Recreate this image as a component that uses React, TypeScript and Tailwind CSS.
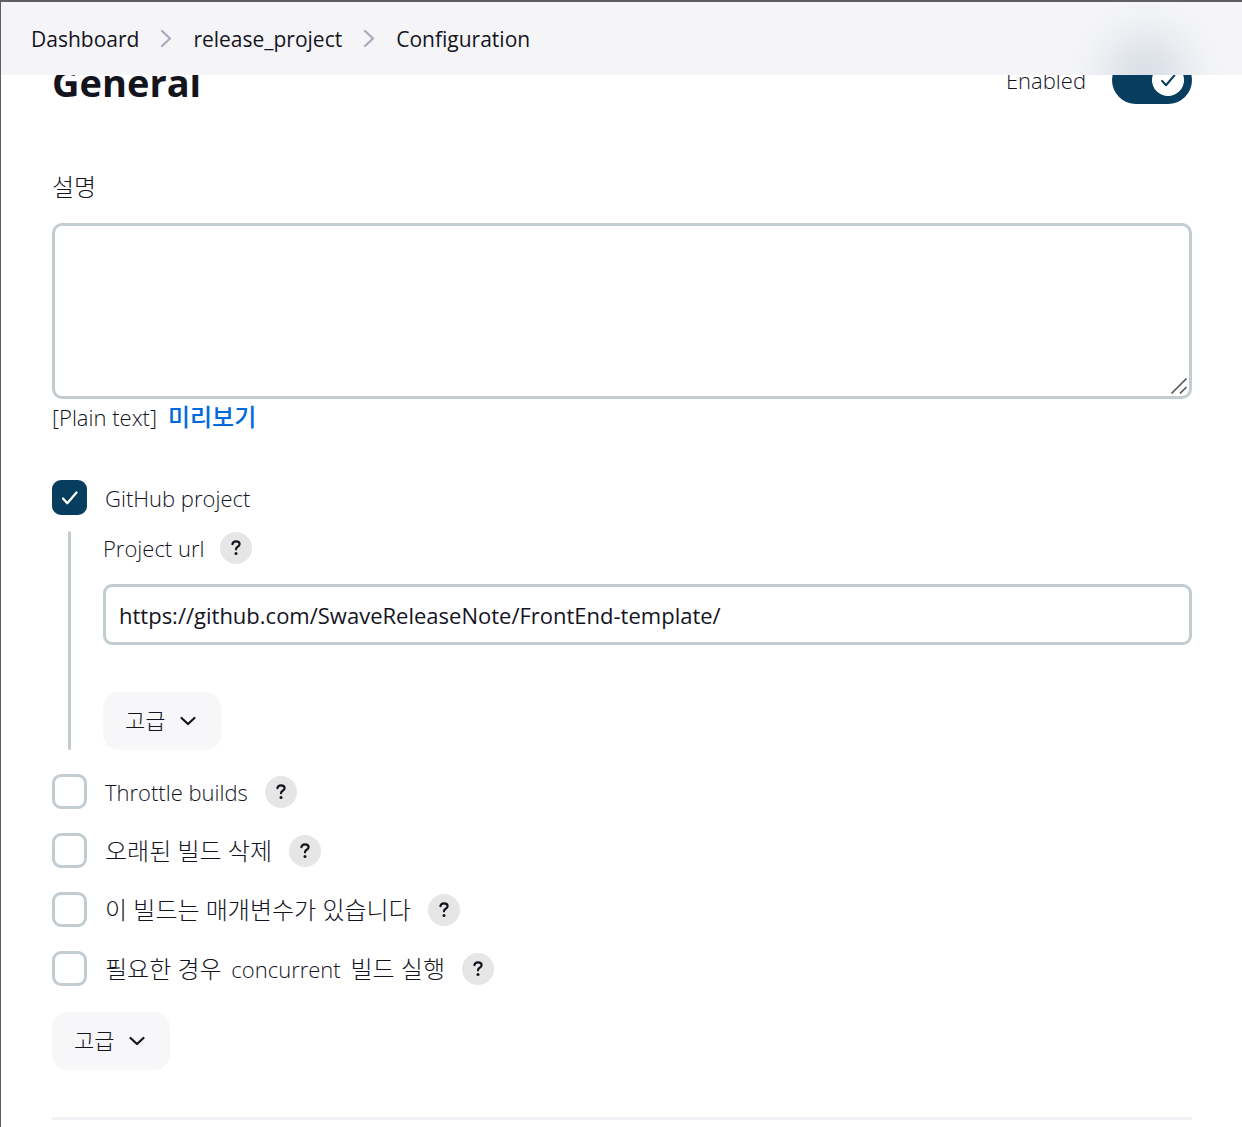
import { useState, type ReactNode } from "react";

function HelpButton({ topic }: { topic: string }) {
  return (
    <button
      type="button"
      aria-label={`Help for feature: ${topic}`}
      className="flex size-8 shrink-0 items-center justify-center rounded-full bg-[#e6e6e6]"
    >
      <svg viewBox="0 0 32 32" className="size-8" fill="none" aria-hidden="true">
        <path
          d="M12.4 12.2c.3-1.900 1.700-2.900 3.600-2.900 2.200 0 3.600 1.100 3.600 2.800 0 1.300-.7 2-1.900 2.700-1.200.7-1.700 1.300-1.700 2.500"
          stroke="#14141f"
          strokeWidth="2.200"
          strokeLinecap="round"
          strokeLinejoin="round"
        />
        <circle cx="16" cy="21.400" r="1.500" fill="#14141f" />
      </svg>
    </button>
  );
}

function Check({ className }: { className: string }) {
  return (
    <svg viewBox="0 0 35 35" className={className} fill="none" aria-hidden="true">
      <path
        d="M11 18.500l4.300 4.700 9.200-10.700"
        stroke="currentColor"
        strokeWidth="2.300"
        strokeLinecap="round"
        strokeLinejoin="round"
      />
    </svg>
  );
}

function AdvancedButton() {
  return (
    <button
      type="button"
      className="flex h-[58px] items-center gap-3 self-start rounded-2xl bg-[#f7f7fa] px-[22px] text-[22px]"
    >
      <span className="pb-[3px]">고급</span>
      <svg viewBox="0 0 22 22" className="size-[22px]" fill="none" aria-hidden="true">
        <path
          d="M4.500 8l6.500 6 6.500-6"
          stroke="#14141f"
          strokeWidth="2.200"
          strokeLinecap="round"
          strokeLinejoin="round"
        />
      </svg>
    </button>
  );
}

function CheckRow({
  id,
  label,
  topic,
  defaultChecked = false,
}: {
  id: string;
  label: ReactNode;
  topic?: string;
  defaultChecked?: boolean;
}) {
  return (
    <div className="flex h-[35px] items-center">
      <span className="relative size-[35px] shrink-0">
        <input
          id={id}
          type="checkbox"
          defaultChecked={defaultChecked}
          className="peer block size-[35px] appearance-none rounded-[9px] border-[3px] border-[#c3ccd1] bg-white checked:border-[#073e60] checked:bg-[#073e60]"
        />
        <Check className="pointer-events-none absolute inset-0 hidden size-[35px] text-white peer-checked:block" />
      </span>
      <label htmlFor={id} className="mr-[17px] ml-[18px]">
        {label}
      </label>
      {topic && <HelpButton topic={topic} />}
    </div>
  );
}

function Korean({ children }: { children: ReactNode }) {
  return <span className="text-2xl leading-9">{children}</span>;
}

function Separator() {
  return (
    <svg viewBox="0 0 12 20" className="h-5 w-3" fill="none" aria-hidden="true">
      <path
        d="M2 2l8 7.500-8 7.500"
        stroke="#a9a9bb"
        strokeWidth="2.200"
        strokeLinecap="round"
        strokeLinejoin="round"
      />
    </svg>
  );
}

export default function App() {
  const [enabled, setEnabled] = useState(true);
  const [url, setUrl] = useState("https://github.com/SwaveReleaseNote/FrontEnd-template/");

  return (
    <div className="min-h-screen border-t-2 border-l border-[#5f5f61] bg-white font-['Open_Sans','Noto_Sans_CJK_KR',sans-serif] text-[22px] leading-9 font-light text-[#14141f]">
      <header className="sticky top-0 z-10 h-[73px] bg-[#f5f5f8]">
        {/* Soft shade of the switch that has scrolled beneath the bar */}
        <div className="pointer-events-none absolute right-0 bottom-0 h-full w-48 bg-[radial-gradient(circle_80px_at_50%_100%,#d8dfe6_0%,#dfe4ea_25%,#eaedf1_55%,#f2f3f6_80%,#f5f5f8_100%)]" />
        <nav aria-label="Breadcrumb" className="h-full px-[30px]">
          <ol className="flex h-full items-center gap-[21px] text-[21px] font-normal">
            <li>
              <a href="#dashboard">Dashboard</a>
            </li>
            <li aria-hidden="true">
              <Separator />
            </li>
            <li>
              <a href="#release_project">release_project</a>
            </li>
            <li aria-hidden="true">
              <Separator />
            </li>
            <li>
              <a href="#configuration">Configuration</a>
            </li>
          </ol>
        </nav>
      </header>

      <main className="-mt-[19px] flex flex-col pr-[50px] pl-[51px]">
        <div className="flex h-12 items-center justify-between">
          <h1 className="pt-1 text-[38px] font-bold">General</h1>
          <label className="flex items-center gap-[26px]">
            Enabled
            <span className="relative h-12 w-20">
              <input
                type="checkbox"
                role="switch"
                checked={enabled}
                onChange={(e) => setEnabled(e.target.checked)}
                className="peer block h-12 w-20 appearance-none rounded-full bg-[#c3ccd1] checked:bg-[#073e60]"
              />
              <span className="pointer-events-none absolute top-2 left-2 flex size-8 items-center justify-center rounded-full bg-white text-[#073e60] peer-checked:left-10">
                <Check className="size-8" />
              </span>
            </span>
          </label>
        </div>

        <label htmlFor="description" className="mt-[65px] mb-[18px]">
          <Korean>설명</Korean>
        </label>
        <div className="relative">
          <textarea
            id="description"
            className="block h-44 w-full resize-none rounded-[10px] border-[3px] border-[#c3ccd1] bg-white p-3 outline-none"
          />
          <svg
            viewBox="0 0 18 18"
            className="pointer-events-none absolute right-1 bottom-1 size-[18px]"
            fill="none"
            stroke="#55555a"
            strokeWidth="1.700"
            aria-hidden="true"
          >
            <path d="M1.500 16.500l15-15M10 16.500l6.500-6.500" />
          </svg>
        </div>
        <p className="flex h-9 gap-[11px]">
          <span>[Plain text]</span>
          <a href="#preview" className="text-2xl leading-9 font-medium text-[#006adc]">
            미리보기
          </a>
        </p>

        <div className="mt-[45px] flex flex-col">
          <CheckRow id="github" label="GitHub project" defaultChecked />
          <div className="mt-4 ml-4 flex">
            <div className="w-[3px] rounded-full bg-[#c3ccd1]" />
            <div className="flex grow flex-col pl-8">
              <div className="flex h-[34px] items-center gap-4">
                <label htmlFor="url">Project url</label>
                <HelpButton topic="Project url" />
              </div>
              <input
                id="url"
                type="text"
                value={url}
                onChange={(e) => setUrl(e.target.value)}
                className="mt-[19px] mb-[47px] h-[61px] w-full rounded-[9px] border-[3px] border-[#c3ccd1] bg-white px-[13px] font-normal outline-none"
              />
              <AdvancedButton />
            </div>
          </div>
        </div>

        <div className="mt-6 mb-[26px] flex flex-col gap-6">
          <CheckRow id="throttle" label="Throttle builds" topic="Throttle builds" />
          <CheckRow id="discard" label={<Korean>오래된 빌드 삭제</Korean>} topic="오래된 빌드 삭제" />
          <CheckRow
            id="params"
            label={<Korean>이 빌드는 매개변수가 있습니다</Korean>}
            topic="이 빌드는 매개변수가 있습니다"
          />
          <CheckRow
            id="concurrent"
            label={
              <>
                <Korean>필요한 경우</Korean> <span className="mx-1">concurrent</span>{" "}
                <Korean>빌드 실행</Korean>
              </>
            }
            topic="필요한 경우 concurrent 빌드 실행"
          />
        </div>
        <AdvancedButton />
        <hr className="mt-[47px] border-t-[3px] border-[#f2f2f6]" />
      </main>
    </div>
  );
}
